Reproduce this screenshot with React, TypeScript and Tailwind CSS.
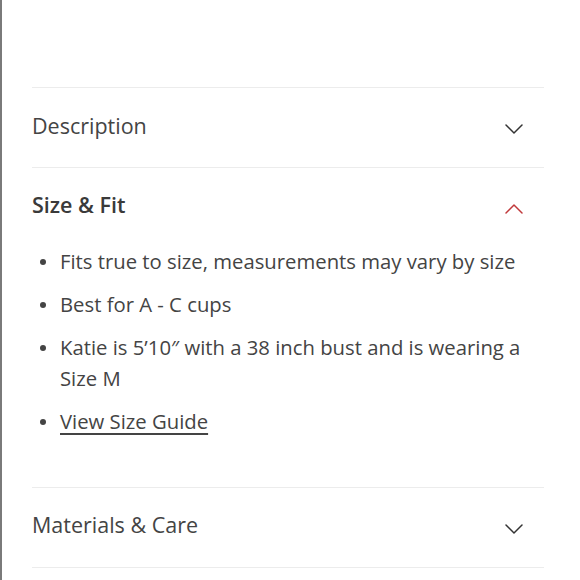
import React from "react";

function Chevron({ up = false, color = "#333" }: { up?: boolean; color?: string }) {
  return (
    <svg width="20" height="12" viewBox="0 0 20 12" fill="none">
      <polyline
        points={up ? "2,10 10,2 18,10" : "2,2 10,10 18,2"}
        stroke={color}
        strokeWidth="1.5"
        strokeLinecap="round"
        strokeLinejoin="round"
      />
    </svg>
  );
}

const fitItems = [
  "Fits true to size, measurements may vary by size",
  "Best for A - C cups",
  "Katie is 5\u201910\u2033 with a 38 inch bust and is wearing a Size M",
];

function Bullet() {
  return (
    <span className="w-[28px] shrink-0 flex pl-[8px]">
      <span className="mt-[13px] w-[6px] h-[6px] rounded-full bg-[#444]" />
    </span>
  );
}

export default function App() {
  return (
    <div
      className="w-[580px] h-[580px] bg-white border-l-2 border-[#7a7a7a] overflow-hidden"
      style={{ fontFamily: "'Open Sans', 'Noto Sans', sans-serif" }}
    >
      <div className="ml-[30px] w-[512px] pt-[87px]">
        <div className="border-t border-[#ececec] h-[80px] flex items-center justify-between">
          <span className="text-[21.5px] text-[#444] -mt-[3px]">Description</span>
          <span className="mr-[20px] mt-[2px]">
            <Chevron />
          </span>
        </div>

        <div className="border-t border-[#ececec]">
          <div className="h-[78px] flex items-center justify-between">
            <span className="text-[21.5px] font-semibold text-[#3a3a3a] -mt-[3px]">Size &amp; Fit</span>
            <span className="mr-[20px] mt-[4px]">
              <Chevron up color="#c0393b" />
            </span>
          </div>
          <ul className="flex flex-col gap-[12px] pb-[50px] pr-[8px]">
            {fitItems.map((t) => (
              <li key={t} className="flex text-[20.3px] leading-[31px] text-[#444]">
                <Bullet />
                <span>{t}</span>
              </li>
            ))}
            <li className="flex text-[20.3px] leading-[31px] text-[#444]">
              <Bullet />
              <a href="#" className="underline underline-offset-[4px] decoration-[1.5px]">
                View Size Guide
              </a>
            </li>
          </ul>
        </div>

        <div className="border-t border-b border-[#ececec] h-[81px] flex items-center justify-between">
          <span className="text-[21.5px] text-[#444] -mt-[5px]">Materials &amp; Care</span>
          <span className="mr-[20px] mt-[2px]">
            <Chevron />
          </span>
        </div>
      </div>
    </div>
  );
}
